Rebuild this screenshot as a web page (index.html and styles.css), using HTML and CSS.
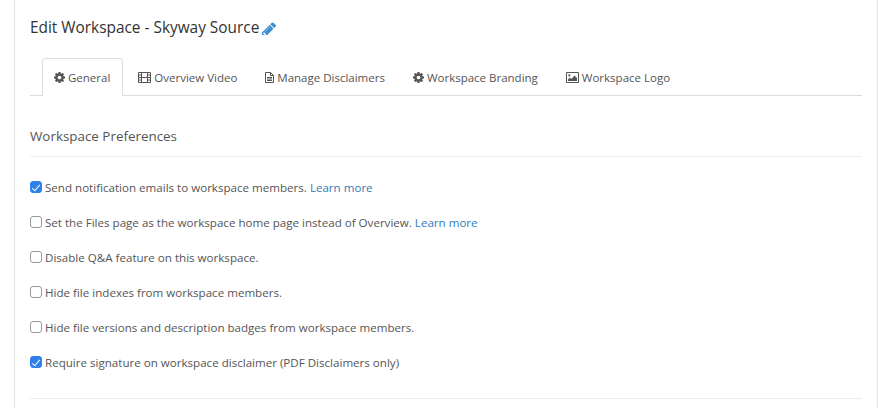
FILE: index.html
```html
<!DOCTYPE html>
<html lang="en">
<head>
<meta charset="utf-8">
<title>Edit Workspace</title>
<link rel="stylesheet" href="styles.css">
</head>
<body>
<main class="panel">
  <h1 class="title">Edit Workspace - Skyway Source
    <svg class="pencil" viewBox="0 0 1515 1515"><path d="M363 1536l91-91-235-235-91 91v107h128v128h107zm523-928q0-22-22-22-10 0-17 7l-542 542q-7 7-7 17 0 22 22 22 10 0 17-7l542-542q7-7 7-17zm-54-192l416 416-832 832h-416v-416zm683 96q0 53-37 90l-166 166-416-416 166-165q36-38 90-38 53 0 91 38l235 234q37 39 37 91z"/></svg>
  </h1>
  <nav class="tabs">
    <a class="tab active"><svg class="ico gear" viewBox="0 0 1536 1536"><path d="M1024 768q0-106-75-181t-181-75-181 75-75 181 75 181 181 75 181-75 75-181zm512-109v222q0 12-8 23t-20 13l-185 28q-19 54-39 91 35 50 107 138 10 12 10 25t-9 23q-27 37-99 108t-94 71q-12 0-26-9l-138-108q-44 23-91 38-16 136-29 186-7 28-36 28h-222q-14 0-24.500-8.500t-11.500-21.500l-28-184q-49-16-90-37l-141 107q-10 9-25 9-14 0-25-11-126-114-165-168-7-10-7-23 0-12 8-23 15-21 51-66.500t54-70.500q-27-50-41-99l-183-27q-13-2-21-12.500t-8-23.500v-222q0-12 8-23t19-13l186-28q14-46 39-92-40-57-107-138-10-12-10-24 0-10 9-23 26-36 98.500-107.500t94.500-71.500q13 0 26 10l138 107q44-23 91-38 16-136 29-186 7-28 36-28h222q14 0 24.500 8.500t11.500 21.500l28 184q49 16 90 37l142-107q9-9 24-9 13 0 25 10 129 119 165 170 7 8 7 22 0 12-8 23-15 21-51 66.500t-54 70.500q26 50 41 98l183 28q13 2 21 12.500t8 23.500z"/></svg> General</a>
    <a class="tab"><svg class="ico film" viewBox="0 0 13 11"><path class="line" d="M.5.500h12v10H.5zM3.500.500v10M9.500.500v10M.5 3h3M.5 5.500h3M.5 8h3M9.500 3h3M9.500 5.500h3M9.500 8h3M3.500 5.500h6"/></svg> Overview Video</a>
    <a class="tab"><svg class="ico file" viewBox="0 0 9 11"><path class="line" d="M.5.500h5l3 3v7h-8zM5.500.5v3h3M2 5.500h5M2 7h5M2 8.500h5"/></svg> Manage Disclaimers</a>
    <a class="tab"><svg class="ico gear" viewBox="0 0 1536 1536"><path d="M1024 768q0-106-75-181t-181-75-181 75-75 181 75 181 181 75 181-75 75-181zm512-109v222q0 12-8 23t-20 13l-185 28q-19 54-39 91 35 50 107 138 10 12 10 25t-9 23q-27 37-99 108t-94 71q-12 0-26-9l-138-108q-44 23-91 38-16 136-29 186-7 28-36 28h-222q-14 0-24.500-8.500t-11.500-21.500l-28-184q-49-16-90-37l-141 107q-10 9-25 9-14 0-25-11-126-114-165-168-7-10-7-23 0-12 8-23 15-21 51-66.500t54-70.500q-27-50-41-99l-183-27q-13-2-21-12.500t-8-23.500v-222q0-12 8-23t19-13l186-28q14-46 39-92-40-57-107-138-10-12-10-24 0-10 9-23 26-36 98.500-107.500t94.500-71.500q13 0 26 10l138 107q44-23 91-38 16-136 29-186 7-28 36-28h222q14 0 24.500 8.500t11.500 21.500l28 184q49 16 90 37l142-107q9-9 24-9 13 0 25 10 129 119 165 170 7 8 7 22 0 12-8 23-15 21-51 66.500t-54 70.500q26 50 41 98l183 28q13 2 21 12.500t8 23.500z"/></svg> Workspace Branding</a>
    <a class="tab"><svg class="ico pic" viewBox="0 0 13 11"><path class="line" d="M.5.500h12v10H.5z"/><path d="M2 9V7.500L4 5.500l1.500 1.500L8.500 3.500 11 6v3z"/><circle cx="3.300" cy="3.300" r="1.100"/></svg> Workspace Logo</a>
  </nav>
  <h2 class="section">Workspace Preferences</h2>
  <div class="options">
    <label class="option"><input type="checkbox" checked>Send notification emails to workspace members. <a class="link">Learn more</a></label>
    <label class="option"><input type="checkbox">Set the Files page as the workspace home page instead of Overview. <a class="link">Learn more</a></label>
    <label class="option"><input type="checkbox">Disable Q&amp;A feature on this workspace.</label>
    <label class="option"><input type="checkbox">Hide file indexes from workspace members.</label>
    <label class="option"><input type="checkbox">Hide file versions and description badges from workspace members.</label>
    <label class="option"><input type="checkbox" checked>Require signature on workspace disclaimer (PDF Disclaimers only)</label>
  </div>
  <div class="rule"></div>
</main>
</body>
</html>
```
FILE: styles.css
```css
* { box-sizing: border-box; }
html, body { margin: 0; padding: 0; background: #fff; height: 100%; overflow: hidden; }
body { font-family: "Open Sans", "Noto Sans", sans-serif; font-size: 11.5px; color: #555; }
.panel {
  margin-left: 14px;
  width: 864px;
  height: 408px;
  border-left: 1px solid #e2e2e2;
  border-right: 1px solid #e2e2e2;
  padding: 18px 15px 0;
}
.title {
  margin: 0;
  height: 20px;
  font-size: 15.4px;
  line-height: 20px;
  font-weight: 400;
  color: #333;
  display: flex;
  align-items: center;
  gap: 3px;
}
.pencil { width: 14px; height: 14px; fill: #3f8ecb; }
.tabs {
  display: flex;
  margin-top: 20px;
  padding-left: 12px;
  height: 38px;
  border-bottom: 1px solid #ddd;
}
.tab {
  display: flex;
  align-items: center;
  white-space: pre;
  padding: 0 12px;
  height: 38px;
  border: 1px solid transparent;
  border-bottom: 0;
  color: #555;
  margin-right: 2px;
}
.tab.active {
  padding-left: 11px;
  background: #fff;
  border-color: #ddd;
  border-radius: 4px 4px 0 0;
}
.ico { flex: none; fill: #555; height: 11px; }
.gear { width: 11px; }
.film { width: 13px; }
.file { width: 9px; }
.pic { width: 13px; }
.line { fill: none; stroke: #555; stroke-width: 1; }
.section {
  margin: 30px 0 0;
  padding-bottom: 10px;
  height: 31px;
  font-size: 13.4px;
  line-height: 20px;
  font-weight: 400;
  color: #555;
  border-bottom: 1px solid #eee;
}
.options {
  display: flex;
  flex-direction: column;
  gap: 15px;
  padding-top: 20px;
  font-size: 11.58px;
}
.option {
  display: flex;
  align-items: center;
  height: 20px;
  white-space: pre;
}
.option input {
  appearance: none;
  flex: none;
  position: relative;
  width: 12px;
  height: 12px;
  margin: 0 3px 0 0;
  background: #fff;
  border: 1px solid #999;
  border-radius: 3px;
}
.option input:checked {
  background: #2f80ea;
  border-color: #2f80ea;
}
.option input:checked::after {
  content: "";
  position: absolute;
  left: 3px;
  top: 1px;
  width: 3px;
  height: 7px;
  border: solid #fff;
  border-width: 0 1.500px 1.500px 0;
  transform: rotate(40deg);
}
.link { color: #337ab7; }
.rule { margin-top: 26px; border-top: 1px solid #eee; }
```
